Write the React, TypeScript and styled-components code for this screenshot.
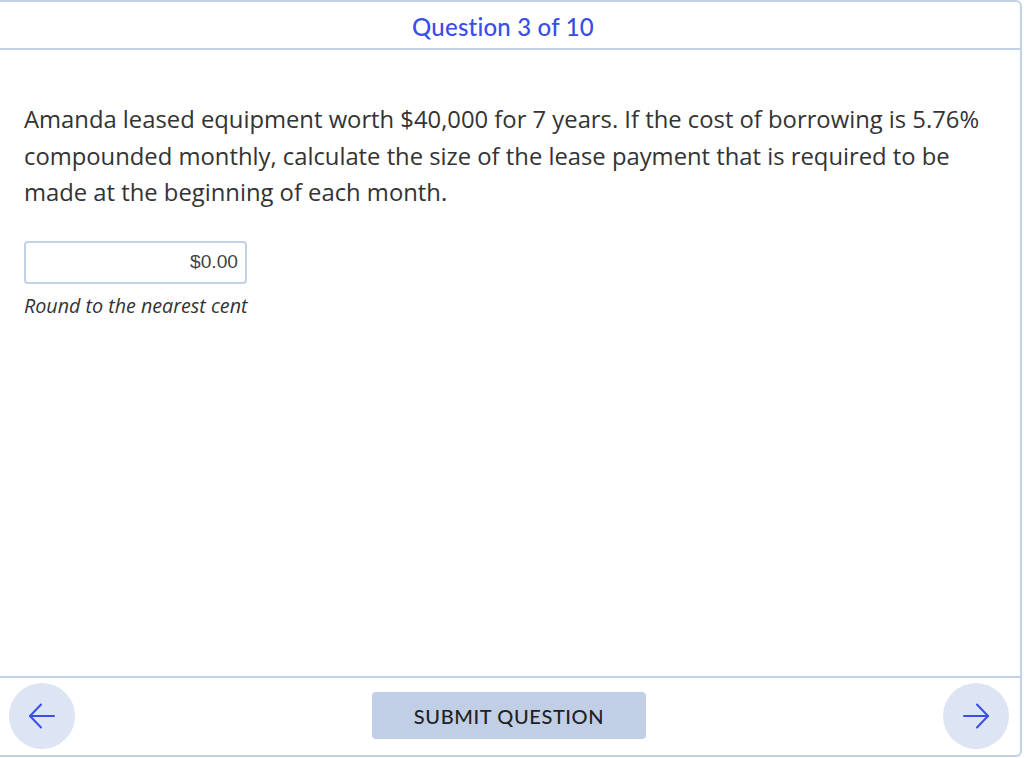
import React from "react";
import styled, { createGlobalStyle } from "styled-components";

const Global = createGlobalStyle`
  html, body { margin: 0; padding: 0; background: #ffffff; }
  body { width: 1024px; height: 758px; overflow: hidden; }
`;

const Frame = styled.div`
  box-sizing: border-box;
  width: 1022px;
  height: 757px;
  border: 2px solid #c3d1e8;
  border-left: none;
  border-radius: 0 6px 6px 0;
  display: flex;
  flex-direction: column;
  background: #fff;
`;

const Header = styled.header`
  box-sizing: border-box;
  height: 48px;
  flex: 0 0 48px;
  border-bottom: 2px solid #c3d1e8;
  display: flex;
  align-items: center;
  justify-content: center;
  padding-right: 14px;
  padding-top: 2px;
  font-family: Lato, "Open Sans", sans-serif;
  font-size: 24px;
  font-weight: 500;
  color: #3a4ee6;
  letter-spacing: 0.2px;
`;

const Content = styled.main`
  flex: 1;
  padding: 51px 24px 0 24px;
  font-family: "Open Sans", sans-serif;
`;

const Prompt = styled.p`
  margin: 0;
  font-size: 23.8px;
  line-height: 36.5px;
  color: #333333;
  max-width: 972px;
`;

const AnswerBox = styled.div`
  box-sizing: border-box;
  margin-top: 30px;
  width: 223px;
  height: 43px;
  border: 2px solid #c3d1e8;
  border-radius: 4px;
  display: flex;
  align-items: center;
  justify-content: flex-end;
  padding-right: 7px;
  font-family: "Liberation Sans", Arial, sans-serif;
  font-size: 19.2px;
  color: #444;
`;

const Hint = styled.div`
  margin-top: 10px;
  font-size: 19.7px;
  line-height: 24px;
  font-style: italic;
  color: #333;
`;

const Footer = styled.footer`
  box-sizing: border-box;
  height: 79px;
  flex: 0 0 79px;
  border-top: 2px solid #c3d1e8;
  display: flex;
  align-items: center;
  justify-content: space-between;
  padding: 0 11px 2px 9px;
`;

const NavButton = styled.button`
  width: 66px;
  height: 66px;
  border-radius: 50%;
  border: none;
  background: #dde4f3;
  display: flex;
  align-items: center;
  justify-content: center;
  padding: 0;
  color: #3a4ee6;
`;

const SubmitButton = styled.button`
  width: 274px;
  height: 47px;
  border: none;
  border-radius: 4px;
  background: #c0cfe6;
  font-family: Lato, sans-serif;
  font-size: 20px;
  font-weight: 500;
  letter-spacing: 0.6px;
  color: #222;
`;

const Arrow = ({ dir }: { dir: "left" | "right" }) => (
  <svg width="28" height="28" viewBox="0 0 28 28" fill="none" stroke="currentColor" strokeWidth="2" strokeLinecap="round" strokeLinejoin="round" style={{ transform: dir === "left" ? "scaleX(-1)" : undefined }}>
    <path d="M2 14h24" />
    <path d="M15 2.5l11 11.5-11 11.5" />
  </svg>
);

export default function App() {
  return (
    <>
      <Global />
      <Frame>
        <Header>Question 3 of 10</Header>
        <Content>
          <Prompt>
            Amanda leased equipment worth $40,000 for 7 years. If the cost of borrowing is 5.76% compounded monthly, calculate the size of the lease payment that is required to be made at the beginning of each month.
          </Prompt>
          <AnswerBox>$0.00</AnswerBox>
          <Hint>Round to the nearest cent</Hint>
        </Content>
        <Footer>
          <NavButton aria-label="Previous"><Arrow dir="left" /></NavButton>
          <SubmitButton>SUBMIT QUESTION</SubmitButton>
          <NavButton aria-label="Next"><Arrow dir="right" /></NavButton>
        </Footer>
      </Frame>
    </>
  );
}
